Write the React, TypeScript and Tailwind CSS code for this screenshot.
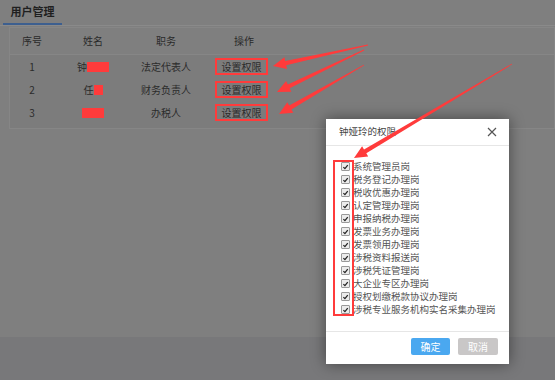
import React from 'react';

const rows = [
  { no: '1', surname: '钟', mask: 'w-[22px]', role: '法定代表人' },
  { no: '2', surname: '任', mask: 'w-[9px]', role: '财务负责人' },
  { no: '3', surname: '', mask: 'w-[22px]', role: '办税人' },
];

const perms = [
  '系统管理员岗',
  '税务登记办理岗',
  '税收优惠办理岗',
  '认定管理办理岗',
  '申报纳税办理岗',
  '发票业务办理岗',
  '发票领用办理岗',
  '涉税资料报送岗',
  '涉税凭证管理岗',
  '大企业专区办理岗',
  '授权划缴税款协议办理岗',
  '涉税专业服务机构实名采集办理岗',
];

// tapered red arrow, tail thin and head filled
function arrowPoints(x1: number, y1: number, x2: number, y2: number) {
  const len = Math.hypot(x2 - x1, y2 - y1);
  const dx = (x2 - x1) / len;
  const dy = (y2 - y1) / len;
  const nx = -dy;
  const ny = dx;
  const bx = x2 - dx * 13;
  const by = y2 - dy * 13;
  const p = (x: number, y: number) => `${x.toFixed(1)},${y.toFixed(1)}`;
  return [
    p(x1 + nx * 0.4, y1 + ny * 0.4),
    p(bx + nx * 2.2, by + ny * 2.2),
    p(bx + nx * 6, by + ny * 6),
    p(x2, y2),
    p(bx - nx * 6, by - ny * 6),
    p(bx - nx * 2.2, by - ny * 2.2),
    p(x1 - nx * 0.4, y1 - ny * 0.4),
  ].join(' ');
}

const arrows = [
  [368, 45, 273, 66],
  [364, 50, 277, 92],
  [364, 65, 279, 114],
  [512, 64, 354, 158],
];

const Check = () => (
  <span className="flex h-[9px] w-[9px] flex-none items-center justify-center rounded-[1px] border border-[#9a9a9a] bg-[#ececec]">
    <svg viewBox="0 0 10 10" className="h-[8px] w-[8px]">
      <path d="M2 5.2 L4.2 7.4 L8.2 2.4" fill="none" stroke="#222" strokeWidth="1.8" />
    </svg>
  </span>
);

export default function App() {
  return (
    <div
      className="relative flex h-[380px] w-[555px] flex-col overflow-hidden bg-[#7f7f7f] text-[#2b2b2b]"
      style={{ fontFamily: '"Noto Sans CJK SC", "Noto Sans", sans-serif' }}
    >
      {/* Page under the mask */}
      <div className="flex-1">
        <div className="flex h-[26px] items-end border-b border-[#8a8a8a] pl-[3px]">
          <div className="flex h-[26px] w-[59px] items-center justify-center border-b-2 border-[#3d5f8f] text-[11px] font-bold leading-none text-[#1f1f1f]">
            用户管理
          </div>
        </div>

        <div className="ml-[9px] mt-[1px] border border-[#868686] bg-[#7c7c7c] pb-[4px] text-[10px] leading-none">
          <div className="grid h-[27px] grid-cols-[44px_78px_68px_88px] items-center border-b border-[#868686] bg-[#7f7f7f] text-[#2a2a2a]">
            <span className="text-center">序号</span>
            <span className="text-center">姓名</span>
            <span className="text-center">职务</span>
            <span className="text-center">操作</span>
          </div>
          {rows.map((r) => (
            <div key={r.no} className="grid h-[23px] grid-cols-[44px_78px_68px_88px] items-center">
              <span className="text-center">{r.no}</span>
              <span className="flex items-center justify-center">
                {r.surname && <span>{r.surname}</span>}
                <span className={`h-[10px] ${r.mask} bg-[#ff3b3b]`} />
              </span>
              <span className="text-center">{r.role}</span>
              <span className="flex justify-center pr-[5px]">
                <span className="flex h-[17px] w-[53px] items-center justify-center border-2 border-[#ff3b3b]">
                  设置权限
                </span>
              </span>
            </div>
          ))}
        </div>
      </div>
      <div className="h-[43px] bg-[#78787a]" />

      {/* Permission dialog */}
      <div className="absolute left-[326px] top-[119px] flex h-[245px] w-[183px] flex-col bg-white shadow-[0_0_14px_rgba(0,0,0,0.45)]">
        <div className="flex h-[27px] flex-none items-center justify-between border-b border-[#e6e6e6] pl-[13px] pr-[12px]">
          <span className="text-[9.5px] leading-none text-[#444]">钟娅玲的权限</span>
          <svg viewBox="0 0 10 10" className="h-[10px] w-[10px]">
            <path d="M1 1 L9 9 M9 1 L1 9" stroke="#555" strokeWidth="1.2" />
          </svg>
        </div>
        <div className="flex-1 pl-[15px] pt-[14px]">
          {perms.map((p) => (
            <div key={p} className="flex h-[13px] items-center gap-[3px] text-[9.5px] leading-none text-[#555]">
              <Check />
              <span className="whitespace-nowrap">{p}</span>
            </div>
          ))}
        </div>
        <div className="flex h-[33px] flex-none items-start justify-end gap-[8px] border-t border-[#e6e6e6] pr-[11px] pt-[6px]">
          <button className="flex h-[17px] w-[39px] items-center justify-center rounded-[2px] bg-[#4aa8f0] text-[10px] text-white">
            确定
          </button>
          <button className="flex h-[17px] w-[40px] items-center justify-center rounded-[2px] bg-[#c9c7c7] text-[10px] text-white">
            取消
          </button>
        </div>
      </div>

      {/* Annotation marks */}
      <div className="absolute left-[333px] top-[160px] h-[156px] w-[21px] border-2 border-[#ff3b3b]" />
      <svg className="pointer-events-none absolute left-0 top-0" width="555" height="380">
        {arrows.map(([a, b, c, d], i) => (
          <polygon key={i} points={arrowPoints(a, b, c, d)} fill="#ff3b3b" />
        ))}
      </svg>
    </div>
  );
}
